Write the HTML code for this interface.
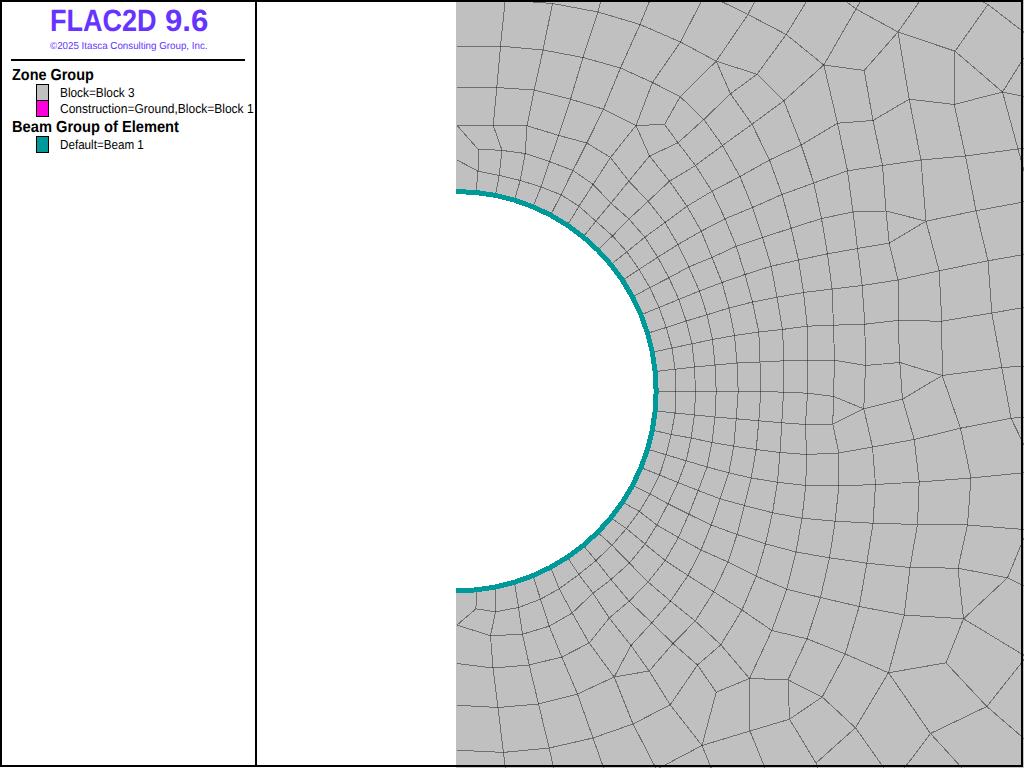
<!DOCTYPE html>
<html><head><meta charset="utf-8"><title>FLAC2D 9.6</title>
<style>
html,body{margin:0;padding:0;background:#fff;}
body{width:1024px;height:768px;position:relative;overflow:hidden;font-family:"Liberation Sans",sans-serif;}
#plot{position:absolute;left:0;top:0;}
.t{text-rendering:geometricPrecision;position:absolute;white-space:nowrap;transform-origin:0 0;line-height:1;color:#000;}
#title{left:50.2px;top:6.0px;font-size:30.8px;font-weight:bold;color:#6633ff;transform:scaleX(0.8775);}
#title2{left:164.6px;top:6.0px;font-size:30.8px;font-weight:bold;color:#6633ff;transform:scaleX(1.012);}
#sub{left:50px;top:41.9px;font-size:10.2px;color:#6633ff;transform:scaleX(0.958);}
.h{font-size:16px;font-weight:bold;}
.i{font-size:13px;}
#h1{left:11.7px;top:67.5px;transform:scaleX(0.9023);}
#i1{left:59.9px;top:86.0px;transform:scaleX(0.909);}
#i2{left:59.9px;top:102.0px;transform:scaleX(0.924);}
#h2{left:12.2px;top:119.5px;transform:scaleX(0.9159);}
#i3{left:59.9px;top:138.0px;transform:scaleX(0.896);}
.sw{position:absolute;left:36px;width:11px;height:15px;border:1px solid #000;}
</style></head><body>
<svg id="plot" width="1024" height="768" viewBox="0 0 1024 768">
<rect x="0" y="0" width="1024" height="768" fill="#ffffff"/>
<rect x="456" y="0" width="567.9" height="767.9" fill="#c0c0c0"/>
<circle cx="456.5" cy="391.2" r="199.65" fill="#ffffff"/>
<g fill="none" stroke="#000" stroke-opacity="0.42" stroke-width="1" stroke-linejoin="round" shape-rendering="crispEdges"><path d="M476.1 192.5 L478.0 171.2 L478.0 149.1 M495.4 195.4 L499.2 175.4 L502.0 150.4 L493.2 125.4 L496.8 87.5 L500.5 46.2 L505.0 2.0 M514.5 200.1 L520.2 180.4 L525.2 153.5 L527.0 125.8 L534.2 90.0 L543.0 50.0 L552.5 3.5 M532.9 206.7 L541.1 187.0 L549.5 161.6 L558.6 135.4 L570.5 99.2 L583.0 57.5 L598.0 12.0 L600.5 2.0 M550.6 215.1 L561.1 194.8 L573.0 170.4 L586.8 143.0 L603.5 109.2 L620.5 68.0 L640.0 24.5 L649.2 2.0 M567.4 225.2 L579.0 206.2 L593.1 184.4 L610.5 157.5 L636.0 125.5 L652.5 82.5 L680.5 42.0 L701.0 2.0 M583.2 236.9 L595.9 221.2 L611.0 203.1 L628.8 181.2 L649.5 156.0 L678.0 142.8 L703.8 119.5 L730.5 93.8 L757.0 74.2 L786.2 34.5 L806.2 2.0 M597.7 250.0 L612.5 235.9 L629.0 219.0 L648.1 201.2 L669.5 181.2 L695.5 165.5 L722.5 145.5 L752.0 124.2 L783.8 100.8 L823.8 65.0 L856.0 9.0 L860.0 2.0 M610.8 264.5 L626.9 251.9 L644.8 237.2 L665.0 222.5 L687.0 206.2 L712.0 191.2 L740.0 176.5 L769.5 160.0 L801.2 145.0 L837.5 123.2 L873.0 120.5 L909.2 99.2 L954.2 104.5 L1002.5 92.0 L1024.0 96.4 M622.5 280.3 L639.1 269.4 L657.7 257.2 L678.0 244.5 L701.2 231.2 L725.0 218.8 L752.5 207.5 L782.0 194.5 L813.8 183.0 L847.5 170.8 L882.5 165.5 L921.0 160.0 L965.5 156.0 L1018.0 149.0 L1024.0 148.0 M632.6 297.1 L649.8 287.5 L668.9 277.8 L688.8 266.9 L712.0 257.5 L736.2 246.2 L762.5 237.5 L791.2 228.2 L821.5 218.5 L853.0 212.0 L886.0 211.0 L926.0 221.2 L976.0 210.8 L1024.0 201.9 M641.0 314.8 L659.1 307.5 L678.8 299.4 L699.5 291.0 L722.0 282.5 L745.0 274.5 L771.2 266.2 L798.5 260.0 L827.5 253.8 L857.5 248.5 L889.2 243.2 L926.0 221.2 M647.6 333.2 L666.2 327.5 L686.2 321.0 L707.0 314.8 L729.0 308.0 L752.5 302.0 L777.0 297.2 L803.5 292.5 L832.0 289.0 L862.2 285.5 L898.0 280.0 L939.2 270.8 L988.0 260.8 L1024.0 254.5 M652.3 352.3 L672.0 348.0 L692.0 343.8 L712.5 339.5 L734.5 335.5 L758.8 332.0 L782.5 329.4 L807.2 326.2 L833.5 325.2 L864.8 324.2 L898.0 320.5 L941.8 321.2 L991.8 313.0 L1024.0 307.5 M655.2 371.6 L675.1 369.2 L694.5 367.0 L715.0 365.0 L737.0 363.0 L760.0 362.0 L784.0 360.8 L808.0 360.2 L834.5 360.2 L865.5 365.5 L899.8 362.5 L942.2 375.5 L1001.8 367.5 L1024.0 366.1 M656.1 391.2 L675.5 391.4 L695.5 391.4 L716.2 391.4 L738.2 391.4 L760.8 391.4 L783.5 392.2 L807.5 393.2 L833.5 396.5 L863.8 408.8 L902.5 399.2 L942.2 375.5 M655.2 410.8 L675.1 413.0 L694.5 415.0 L715.0 417.0 L736.2 418.8 L758.8 420.8 L781.8 422.8 L805.5 424.5 L832.8 424.0 L863.8 408.8 M652.3 430.1 L671.2 434.5 L691.2 438.0 L712.0 442.5 L733.8 446.2 L756.2 449.5 L780.0 452.5 L806.5 454.5 L838.8 453.0 L872.5 447.0 L914.2 439.5 L960.5 428.2 L1011.0 418.2 L1024.0 417.3 M647.6 449.2 L666.2 454.8 L686.2 460.8 L707.0 467.0 L728.8 472.8 L751.2 478.0 L777.5 482.2 L805.8 485.5 L838.8 486.0 L875.5 484.5 L919.2 482.0 L971.0 478.0 L1024.0 472.7 M641.0 467.6 L659.5 475.0 L678.0 482.5 L698.2 490.5 L720.0 498.8 L744.5 505.5 L772.5 512.8 L802.0 518.2 L835.2 521.2 L873.0 523.2 L917.5 524.5 L967.5 525.0 L1024.0 529.5 M632.6 485.3 L650.0 493.8 L668.0 503.8 L688.8 514.2 L711.2 525.0 L737.0 534.5 L765.5 543.8 L796.0 552.0 L829.5 557.8 L866.8 563.2 L910.0 567.5 L958.0 568.2 L1007.5 577.8 L1024.0 586.0 M622.5 502.1 L639.4 511.5 L656.9 525.0 L678.4 537.5 L701.0 550.0 L728.0 562.0 L756.2 576.2 L786.8 589.2 L820.5 597.5 L859.2 606.5 L904.2 615.0 L963.5 618.8 L1024.0 655.3 M610.8 517.9 L626.5 528.5 L645.0 544.0 L665.2 560.5 L688.0 575.5 L713.8 591.8 L742.0 610.0 L771.8 630.5 L807.0 638.8 L845.2 654.0 L888.5 672.8 L946.0 662.8 L986.8 706.5 L1024.0 738.6 M597.7 532.4 L612.0 545.2 L629.4 563.0 L648.0 582.0 L670.5 601.0 L695.2 621.0 L720.8 644.8 L749.5 678.5 L750.0 731.0 L765.0 768.0 M583.2 545.5 L596.0 560.5 L611.0 579.5 L629.2 601.2 L651.8 622.8 L673.0 643.5 L697.5 665.0 L716.2 692.2 L702.0 745.5 M567.4 557.2 L578.8 574.5 L593.0 593.2 L609.2 618.0 L631.0 645.5 L649.2 671.0 L670.2 704.8 L702.0 745.5 L711.2 768.0 M550.6 567.3 L559.2 588.8 L572.2 613.0 L589.2 643.0 L614.2 677.0 L633.0 724.0 L655.8 768.0 M532.9 575.7 L540.5 599.2 L549.2 626.2 L561.8 657.0 L577.5 694.0 L593.0 738.0 L603.6 768.0 M514.5 582.3 L518.5 607.5 L522.5 634.2 L529.2 665.0 L538.5 704.0 L549.2 748.0 L553.7 768.0 M495.4 587.0 L495.5 611.8 L490.5 635.8 L493.0 668.0 L498.0 707.5 L503.4 752.4 L505.4 768.0 M476.1 589.9 L476.0 608.8"/><path d="M457.0 160.0 L478.0 171.2 L499.2 175.4 L520.2 180.4 L541.1 187.0 L561.1 194.8 L579.0 206.2 L595.9 221.2 L612.5 235.9 L626.9 251.9 L639.1 269.4 L649.8 287.5 L659.1 307.5 L666.2 327.5 L672.0 348.0 L675.1 369.2 L675.5 391.4 L675.1 413.0 L671.2 434.5 L666.2 454.8 L659.5 475.0 L650.0 493.8 L639.4 511.5 L626.5 528.5 L612.0 545.2 L596.0 560.5 L578.8 574.5 L559.2 588.8 L540.5 599.2 L518.5 607.5 L495.5 611.8 L476.0 608.8 L457.0 625.0 M457.0 125.4 L478.0 149.1 L502.0 150.4 L525.2 153.5 L549.5 161.6 L573.0 170.4 L593.1 184.4 L611.0 203.1 L629.0 219.0 L644.8 237.2 L657.7 257.2 L668.9 277.8 L678.8 299.4 L686.2 321.0 L692.0 343.8 L694.5 367.0 L695.5 391.4 L694.5 415.0 L691.2 438.0 L686.2 460.8 L678.0 482.5 L668.0 503.8 L656.9 525.0 L645.0 544.0 L629.4 563.0 L611.0 579.5 L593.0 593.2 L572.2 613.0 L549.2 626.2 L522.5 634.2 L490.5 635.8 L457.0 625.0 M457.0 125.4 L493.2 125.4 L527.0 125.8 L558.6 135.4 L586.8 143.0 L610.5 157.5 L628.8 181.2 L648.1 201.2 L665.0 222.5 L678.0 244.5 L688.8 266.9 L699.5 291.0 L707.0 314.8 L712.5 339.5 L715.0 365.0 L716.2 391.4 L715.0 417.0 L712.0 442.5 L707.0 467.0 L698.2 490.5 L688.8 514.2 L678.4 537.5 L665.2 560.5 L648.0 582.0 L629.2 601.2 L609.2 618.0 L589.2 643.0 L561.8 657.0 L529.2 665.0 L493.0 668.0 L457.0 663.5 M457.0 87.5 L496.8 87.5 L534.2 90.0 L570.5 99.2 L603.5 109.2 L636.0 125.5 L649.5 156.0 L669.5 181.2 L687.0 206.2 L701.2 231.2 L712.0 257.5 L722.0 282.5 L729.0 308.0 L734.5 335.5 L737.0 363.0 L738.2 391.4 L736.2 418.8 L733.8 446.2 L728.8 472.8 L720.0 498.8 L711.2 525.0 L701.0 550.0 L688.0 575.5 L670.5 601.0 L651.8 622.8 L631.0 645.5 L614.2 677.0 L577.5 694.0 L538.5 704.0 L498.0 707.5 L457.0 705.2 M457.0 46.2 L500.5 46.2 L543.0 50.0 L583.0 57.5 L620.5 68.0 L652.5 82.5 L680.2 96.6 L703.8 119.5 L722.5 145.5 L740.0 176.5 L752.5 207.5 L762.5 237.5 L771.2 266.2 L777.0 297.2 L782.5 329.4 L784.0 360.8 L783.5 392.2 L781.8 422.8 L780.0 452.5 L777.5 482.2 L772.5 512.8 L765.5 543.8 L756.2 576.2 L742.0 610.0 L720.8 644.8 L697.5 665.0 L670.2 704.8 L633.0 724.0 L593.0 738.0 L549.2 748.0 L503.4 752.4 L457.0 750.2 M680.2 96.6 L664.6 124.4 L678.0 142.8 L695.5 165.5 L712.0 191.2 L725.0 218.8 L736.2 246.2 L745.0 274.5 L752.5 302.0 L758.8 332.0 L760.0 362.0 L760.8 391.4 L758.8 420.8 L756.2 449.5 L751.2 478.0 L744.5 505.5 L737.0 534.5 L728.0 562.0 L713.8 591.8 L695.2 621.0 L673.0 643.5 L649.2 671.0 L614.2 677.0 M636.0 125.5 L664.6 124.4 M680.2 96.6 L716.2 61.2 L748.0 14.5 L754.5 2.0 M533.0 2.0 L552.5 3.5 L598.0 12.0 L640.0 24.5 L680.5 42.0 L716.2 61.2 L757.0 74.2 L783.8 100.8 L801.2 145.0 L813.8 183.0 L821.5 218.5 L827.5 253.8 L832.0 289.0 L833.5 325.2 L834.5 360.2 L833.5 396.5 L832.8 424.0 L838.8 453.0 L838.8 486.0 L835.2 521.2 L829.5 557.8 L820.5 597.5 L807.0 638.8 L788.0 679.8 L789.5 719.2 L816.0 763.0 L817.2 768.0 M716.2 61.2 L730.5 93.8 L752.0 124.2 L769.5 160.0 L782.0 194.5 L791.2 228.2 L798.5 260.0 L803.5 292.5 L807.2 326.2 L808.0 360.2 L807.5 393.2 L805.5 424.5 L806.5 454.5 L805.8 485.5 L802.0 518.2 L796.0 552.0 L786.8 589.2 L771.8 630.5 L749.5 678.5 M722.5 2.0 L748.0 14.5 L786.2 34.5 L823.8 65.0 L837.5 123.2 L847.5 170.8 L853.0 212.0 L857.5 248.5 L862.2 285.5 L864.8 324.2 L865.5 365.5 L863.8 408.8 L863.8 408.8 L872.5 447.0 L875.5 484.5 L873.0 523.2 L866.8 563.2 L859.2 606.5 L845.2 654.0 L822.2 697.0 L789.5 719.2 M919.2 2.0 L898.0 32.0 L864.2 70.5 L873.0 120.5 L882.5 165.5 L886.0 211.0 L889.2 243.2 L898.0 280.0 L898.0 320.5 L899.8 362.5 L902.5 399.2 L914.2 439.5 L919.2 482.0 L917.5 524.5 L910.0 567.5 L904.2 615.0 L888.5 672.8 M823.8 65.0 L864.2 70.5 M898.0 32.0 L909.2 99.2 L921.0 160.0 L926.0 221.2 L939.2 270.8 L941.8 321.2 L942.2 375.5 L960.5 428.2 L971.0 478.0 L967.5 525.0 L958.0 568.2 L963.5 618.8 L946.0 662.8 M988.0 4.5 L955.0 51.2 L954.2 104.5 L965.5 156.0 L976.0 210.8 L988.0 260.8 L991.8 313.0 L1001.8 367.5 L1011.0 418.2 L1024.0 444.9 M1024.0 57.7 L1002.5 92.0 L1018.0 149.0 L1024.0 171.0 M846.8 2.0 L856.0 9.0 L898.0 32.0 L955.0 51.2 L1002.5 92.0 M983.0 2.0 L988.0 4.5 L1024.0 32.3 M716.2 692.2 L749.5 678.5 L788.0 679.8 L822.2 697.0 M702.0 745.5 L750.0 731.0 L789.5 719.2 M702.0 745.5 L659.3 768.0 M822.2 697.0 L855.5 727.8 L883.9 768.0 M888.5 672.8 L855.5 727.8 L816.0 763.0 M888.5 672.8 L930.5 733.5 L904.5 768.0 M986.8 706.5 L930.5 733.5 L962.0 768.0 M986.8 706.5 L1024.0 659.7 M963.5 618.8 L1007.5 577.8 L1024.0 537.7"/></g>
<path d="M456.00 191.55 L456.50 191.55 L476.07 192.51 L495.45 195.39 L514.46 200.15 L532.90 206.75 L550.61 215.12 L567.42 225.20 L583.16 236.87 L597.67 250.03 L610.83 264.54 L622.50 280.28 L632.58 297.09 L640.95 314.80 L647.55 333.24 L652.31 352.25 L655.19 371.63 L656.15 391.20 L655.19 410.77 L652.31 430.15 L647.55 449.16 L640.95 467.60 L632.58 485.31 L622.50 502.12 L610.83 517.86 L597.67 532.37 L583.16 545.53 L567.42 557.20 L550.61 567.28 L532.90 575.65 L514.46 582.25 L495.45 587.01 L476.07 589.89 L456.50 590.85 L457.00 590.85" fill="none" stroke="#009999" stroke-width="5" shape-rendering="crispEdges"/>
<rect x="1" y="1" width="1021" height="765" fill="none" stroke="#000" stroke-width="2"/>
<rect x="255" y="1" width="2" height="765" fill="#000"/>
<rect x="11" y="59" width="234" height="2" fill="#000"/>
</svg>
<div class="t" id="title">FLAC2D</div><div class="t" id="title2">9.6</div>
<div class="t" id="sub">©2025 Itasca Consulting Group, Inc.</div>
<div class="t h" id="h1">Zone Group</div>
<div class="sw" style="top:84px;background:#c0c0c0"></div>
<div class="sw" style="top:100px;background:#ff00dc"></div>
<div class="t i" id="i1">Block=Block 3</div>
<div class="t i" id="i2">Construction=Ground,Block=Block 1</div>
<div class="t h" id="h2">Beam Group of Element</div>
<div class="sw" style="top:136px;background:#009999"></div>
<div class="t i" id="i3">Default=Beam 1</div>
</body></html>
